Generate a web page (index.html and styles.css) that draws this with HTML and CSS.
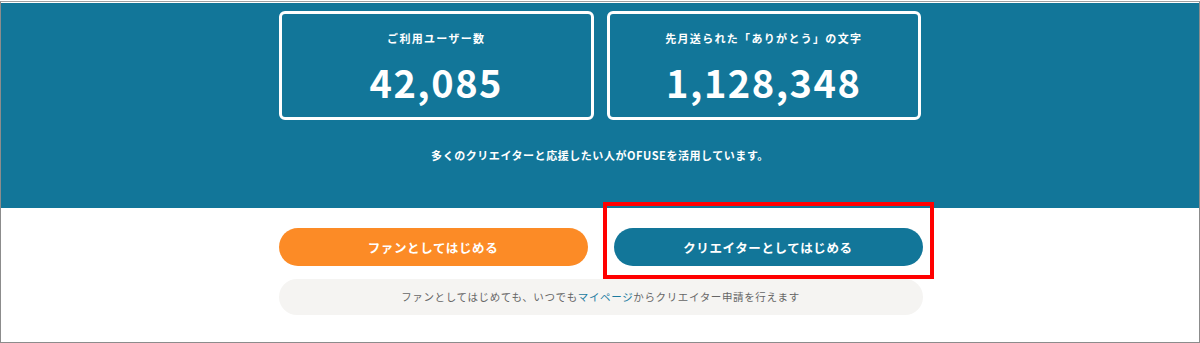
FILE: index.html
```html
<!DOCTYPE html>
<html lang="ja">
<head>
  <meta charset="UTF-8">
  <meta name="viewport" content="width=device-width, initial-scale=1.0">
  <title>OFUSE</title>
  <link rel="stylesheet" href="styles.css">
</head>
<body>
  <div class="frame">
    <section class="stats">
      <div class="stat-grid">
        <div class="stat-card">
          <p class="stat-label">ご利用ユーザー数</p>
          <p class="stat-number">42,085</p>
        </div>
        <div class="stat-card">
          <p class="stat-label">先月送られた「ありがとう」の文字</p>
          <p class="stat-number">1,128,348</p>
        </div>
      </div>
      <p class="stats-lead">多くのクリエイターと応援したい人がOFUSEを活用しています。</p>
    </section>

    <section class="start">
      <div class="start-buttons">
        <a class="btn btn-fan" href="#">ファンとしてはじめる</a>
        <a class="btn btn-creator" href="#">クリエイターとしてはじめる</a>
      </div>
      <p class="start-note">ファンとしてはじめても、いつでも<a href="#">マイページ</a>からクリエイター申請を行えます</p>
    </section>
  </div>
</body>
</html>
```

FILE: styles.css
```css
/* Reset */
* {
  margin: 0;
  padding: 0;
  box-sizing: border-box;
}

body {
  font-family: "Noto Sans CJK JP", "Noto Sans", sans-serif;
  background-color: #fff;
  color: #333;
  padding-top: 1px;
}

.frame {
  height: 342px;
  border: 1px solid #8c8c8c;
  border-top-color: #a0a0a0;
  padding-top: 1px;
  overflow: hidden;
}

/* Stats block */
.stats {
  background-color: #127699;
  padding: 8px 0 45px;
  color: #fff;
}

.stat-grid {
  width: 642px;
  margin: 0 auto;
  display: grid;
  grid-template-columns: 1fr 1fr;
  gap: 13px;
}

.stat-card {
  height: 109px;
  border: 3px solid #fff;
  border-radius: 6px;
  padding-top: 17px;
  text-align: center;
}

.stat-label {
  font-size: 11px;
  line-height: 14px;
  font-weight: 700;
  letter-spacing: 0.12em;
}

.stat-number {
  margin-top: 15px;
  font-size: 38px;
  line-height: 44px;
  font-weight: 700;
  letter-spacing: 0.04em;
}

.stats-lead {
  margin-top: 27px;
  font-size: 11px;
  line-height: 16px;
  font-weight: 700;
  text-align: center;
  letter-spacing: 0.05em;
}

/* Start buttons */
.start {
  width: 645px;
  margin: 20px auto 0;
  padding-left: 1px;
}

.start-buttons {
  display: flex;
  gap: 26px;
}

.btn {
  flex: 1;
  display: flex;
  justify-content: center;
  align-items: center;
  height: 38px;
  border-radius: 19px;
  color: #fff;
  font-size: 12.5px;
  font-weight: 700;
  letter-spacing: 0.05em;
  text-decoration: none;
}

.btn-fan {
  background-color: #fc8b26;
}

.btn-creator {
  position: relative;
  background-color: #127699;
}

/* red highlight box drawn over the creator button */
.btn-creator::after {
  content: "";
  position: absolute;
  top: -26px;
  left: -11px;
  right: -11px;
  bottom: -13px;
  border: 4px solid #ff0000;
}

.start-note {
  margin-top: 13px;
  height: 36px;
  border-radius: 18px;
  background-color: #f5f4f2;
  color: #666;
  font-size: 10.5px;
  line-height: 36px;
  text-align: center;
  letter-spacing: 0.06em;
}

.start-note a {
  color: #1b7ba0;
  text-decoration: none;
}
```
